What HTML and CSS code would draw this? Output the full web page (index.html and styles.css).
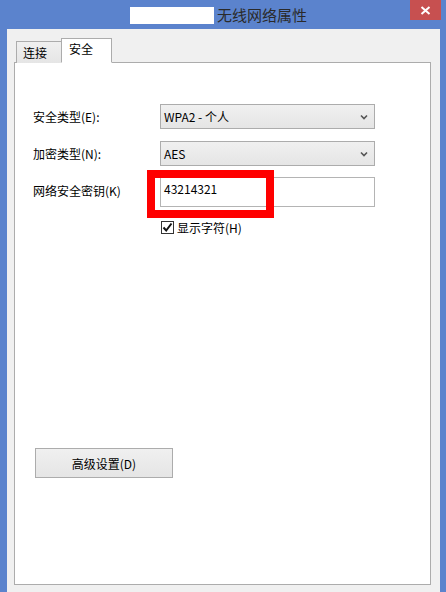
FILE: index.html
```html
<!DOCTYPE html>
<html lang="zh-CN">
<head>
<meta charset="utf-8">
<title>无线网络属性</title>
<link rel="stylesheet" href="styles.css">
</head>
<body>
<div class="window">
  <div class="titlebar">
    <span class="mask"></span>
    <span class="title">无线网络属性</span>
    <div class="close"><svg width="11" height="9" viewBox="0 0 11 9"><path d="M1.5 1 L9.5 8 M9.5 1 L1.5 8" stroke="#fff" stroke-width="2"/></svg></div>
  </div>
  <div class="client">
    <div class="tabs">
      <div class="tab">连接</div>
      <div class="tab active">安全</div>
    </div>
    <div class="panel">
      <div class="form">
        <label class="lbl">安全类型(E):</label>
        <div class="select"><span>WPA2 - 个人</span><svg class="chev" width="8" height="6" viewBox="0 0 8 6"><path d="M1 1.5 L4 4.5 L7 1.5" stroke="#555" stroke-width="1.6" fill="none"/></svg></div>
        <label class="lbl">加密类型(N):</label>
        <div class="select"><span>AES</span><svg class="chev" width="8" height="6" viewBox="0 0 8 6"><path d="M1 1.5 L4 4.5 L7 1.5" stroke="#555" stroke-width="1.6" fill="none"/></svg></div>
        <label class="lbl key">网络安全密钥(K)</label>
        <div class="textbox">43214321</div>
        <span></span>
        <div class="check"><span class="box"><svg width="11" height="11" viewBox="0 0 11 11"><path d="M1.5 5.5 L4.2 8.5 L9.5 1.5" stroke="#111" stroke-width="2" fill="none"/></svg></span><span>显示字符(H)</span></div>
      </div>
      <div class="btn">高级设置(D)</div>
      <div class="highlight"></div>
    </div>
  </div>
</div>
</body>
</html>
```

FILE: styles.css
```css
html, body {
  margin: 0;
  padding: 0;
}
body {
  width: 446px;
  height: 592px;
  background: #5b83cd;
  font-family: "Noto Sans CJK SC", "Liberation Sans", sans-serif;
  font-size: 12px;
  color: #000;
  overflow: hidden;
}
.window {
  display: flex;
  flex-direction: column;
  height: 592px;
}
.titlebar {
  position: relative;
  height: 29px;
  display: flex;
  align-items: flex-start;
  padding-left: 130px;
  padding-top: 7px;
  box-sizing: border-box;
}
.mask {
  width: 84px;
  height: 17px;
  background: #fff;
}
.title {
  margin-left: 3px;
  margin-top: -3px;
  font-size: 15px;
  line-height: 21px;
  color: #2a2a2a;
}
.close {
  position: absolute;
  left: 410px;
  top: 0;
  width: 31px;
  height: 20px;
  background: #c75050;
  display: flex;
  align-items: center;
  justify-content: center;
}
.client {
  flex: 1;
  margin: 0 6px 0 7px;
  background: #f0f0f0;
  padding: 10px 9px 7px 7px;
  display: flex;
  flex-direction: column;
}
.tabs {
  display: flex;
  align-items: flex-end;
  height: 24px;
  padding-left: 2px;
  position: relative;
  z-index: 1;
  margin-bottom: -1px;
}
.tab {
  height: 22px;
  width: 46px;
  box-sizing: border-box;
  border: 1px solid #acacac;
  border-bottom: none;
  background: linear-gradient(#f0f0f0, #e5e5e5);
  padding: 3px 0 0 6px;
  line-height: 16px;
}
.tab.active {
  height: 25px;
  width: 51px;
  background: #fff;
  border-bottom: 1px solid #fff;
  padding: 2px 0 0 7px;
  margin-left: -1px;
}
.panel {
  flex: 1;
  position: relative;
  background: #fff;
  border: 1px solid #acacac;
  padding: 41px 18px 0 18px;
}
.form {
  display: grid;
  grid-template-columns: 127px 215px;
  grid-template-rows: 25px 25px 30px 13px;
  row-gap: 12px;
  align-items: center;
}
.form > :nth-child(5),
.form > :nth-child(6) {
  margin-top: -1px;
}
.lbl {
  line-height: 16px;
}
.lbl.key {
  margin-top: -4px;
}
.select {
  height: 25px;
  box-sizing: border-box;
  border: 1px solid #acacac;
  background: linear-gradient(#f0f0f0, #e5e5e5);
  display: flex;
  align-items: center;
  justify-content: space-between;
  padding: 0 6px 0 3px;
}
.select span {
  line-height: 16px;
}
.textbox {
  height: 30px;
  box-sizing: border-box;
  border: 1px solid #b4b4b4;
  background: #fff;
  padding: 2px 0 0 3px;
  line-height: 18px;
  align-self: start;
  margin-top: -1px;
}
.check {
  display: flex;
  align-items: center;
  gap: 3px;
  padding-left: 1px;
  margin-top: 2px;
}
.box {
  width: 13px;
  height: 13px;
  box-sizing: border-box;
  border: 1px solid #333;
  background: #fff;
  display: flex;
  align-items: center;
  justify-content: center;
}
.check span:last-child {
  line-height: 16px;
}
.btn {
  margin-top: 215px;
  margin-left: 2px;
  width: 138px;
  height: 30px;
  box-sizing: border-box;
  border: 1px solid #acacac;
  background: linear-gradient(#f0f0f0, #e5e5e5);
  display: flex;
  align-items: center;
  justify-content: center;
}
.highlight {
  position: absolute;
  left: 132px;
  top: 107px;
  width: 127px;
  height: 48px;
  box-sizing: border-box;
  border: 8px solid #ff0000;
}
```
